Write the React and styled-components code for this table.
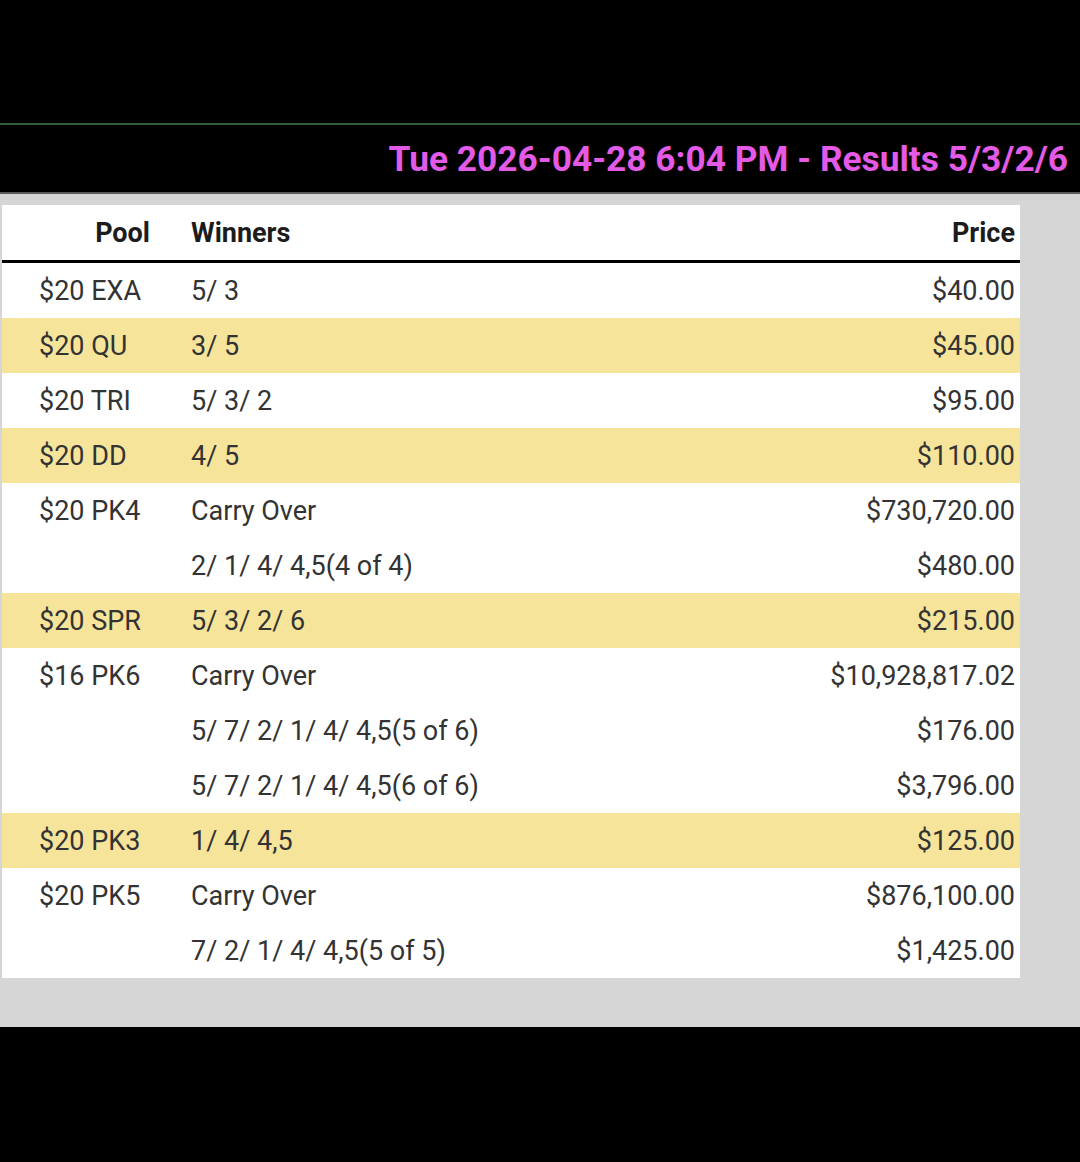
import React from 'react'
import styled, { createGlobalStyle } from 'styled-components'

const GlobalStyle = createGlobalStyle`
  html, body {
    margin: 0;
    padding: 0;
    background: #000;
  }
  body {
    font-family: Roboto, 'Liberation Sans', sans-serif;
  }
`

const Page = styled.div`
  width: 1080px;
  height: 1162px;
  background: #000;
  display: flex;
  flex-direction: column;
`

const TopGap = styled.div`
  height: 123px;
  border-bottom: 2px solid #345f34;
`

const TitleBar = styled.div`
  height: 67px;
  display: flex;
  align-items: center;
  justify-content: flex-end;
  padding-right: 12px;
  border-bottom: 2px solid #5a5a5a;
`

const Title = styled.h1`
  margin: 0;
  font-size: 35.3px;
  font-weight: 700;
  color: #e35ae6;
  letter-spacing: 0;
`

const Panel = styled.div`
  background: #d6d6d6;
  padding: 11px 60px 49px 2px;
`

const Table = styled.div`
  background: #fff;
  width: 1018px;
`

const Row = styled.div`
  display: grid;
  grid-template-columns: 189px 1fr auto;
  align-items: center;
  height: 55px;
  background: ${p => (p.$alt ? '#f6e49b' : '#fff')};
  border-bottom: ${p => (p.$head ? '3px solid #000' : 'none')};
  color: ${p => (p.$head ? '#1c1c1c' : '#333')};
  font-size: 27px;
  font-weight: ${p => (p.$head ? 700 : 400)};
`

const PoolCell = styled.div`
  padding-left: 37px;
  text-align: ${p => (p.$head ? 'right' : 'left')};
  padding-right: ${p => (p.$head ? '41px' : '0')};
  white-space: nowrap;
`

const WinCell = styled.div`
  white-space: nowrap;
`

const PriceCell = styled.div`
  text-align: right;
  padding-right: 5px;
  white-space: nowrap;
`

const BottomGap = styled.div`
  flex: 1;
`

const rows = [
  { pool: '$20 EXA', win: '5/ 3', price: '$40.00' },
  { pool: '$20 QU', win: '3/ 5', price: '$45.00', alt: true },
  { pool: '$20 TRI', win: '5/ 3/ 2', price: '$95.00' },
  { pool: '$20 DD', win: '4/ 5', price: '$110.00', alt: true },
  { pool: '$20 PK4', win: 'Carry Over', price: '$730,720.00' },
  { pool: '', win: '2/ 1/ 4/ 4,5(4 of 4)', price: '$480.00' },
  { pool: '$20 SPR', win: '5/ 3/ 2/ 6', price: '$215.00', alt: true },
  { pool: '$16 PK6', win: 'Carry Over', price: '$10,928,817.02' },
  { pool: '', win: '5/ 7/ 2/ 1/ 4/ 4,5(5 of 6)', price: '$176.00' },
  { pool: '', win: '5/ 7/ 2/ 1/ 4/ 4,5(6 of 6)', price: '$3,796.00' },
  { pool: '$20 PK3', win: '1/ 4/ 4,5', price: '$125.00', alt: true },
  { pool: '$20 PK5', win: 'Carry Over', price: '$876,100.00' },
  { pool: '', win: '7/ 2/ 1/ 4/ 4,5(5 of 5)', price: '$1,425.00' },
]

const App = () => {
  return (
    <Page>
      <GlobalStyle />
      <TopGap />
      <TitleBar>
        <Title>Tue 2026-04-28 6:04 PM - Results 5/3/2/6</Title>
      </TitleBar>
      <Panel>
        <Table>
          <Row $head>
            <PoolCell $head>Pool</PoolCell>
            <WinCell>Winners</WinCell>
            <PriceCell>Price</PriceCell>
          </Row>
          {rows.map((r, i) => (
            <Row key={i} $alt={r.alt}>
              <PoolCell>{r.pool}</PoolCell>
              <WinCell>{r.win}</WinCell>
              <PriceCell>{r.price}</PriceCell>
            </Row>
          ))}
        </Table>
      </Panel>
      <BottomGap />
    </Page>
  )
}

export default App
